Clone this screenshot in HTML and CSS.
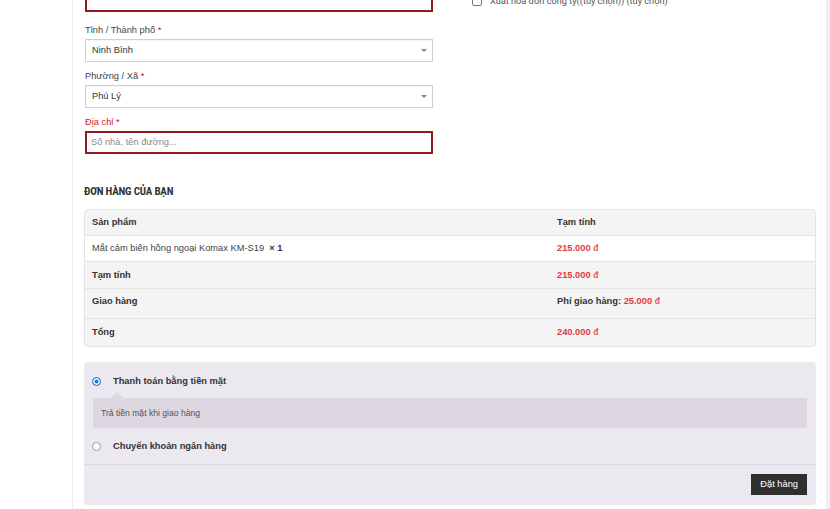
FILE: index.html
```html
<!DOCTYPE html>
<html lang="vi">
<head>
<meta charset="utf-8">
<title>Thanh toán</title>
<link rel="stylesheet" href="styles.css">
</head>
<body>
<div class="page">
  <main class="main">
    <div class="cols">
      <div class="col-left">
        <div class="field first">
          <div class="input error"></div>
        </div>
        <div class="field">
          <label class="label">Tỉnh / Thành phố <abbr class="req">*</abbr></label>
          <div class="select">Ninh Bình<span class="arrow"></span></div>
        </div>
        <div class="field">
          <label class="label">Phường / Xã <abbr class="req">*</abbr></label>
          <div class="select">Phủ Lý<span class="arrow"></span></div>
        </div>
        <div class="field">
          <label class="label label-error">Địa chỉ <abbr class="req">*</abbr></label>
          <div class="input error placeholder">Số nhà, tên đường...</div>
        </div>
      </div>
      <div class="col-right">
        <label class="check"><span class="box"></span>Xuất hoá đơn công ty((tùy chọn)) (tùy chọn)</label>
      </div>
    </div>

    <h3 class="order-title">ĐƠN HÀNG CỦA BẠN</h3>

    <table class="order">
      <colgroup><col class="c1"><col class="c2"></colgroup>
      <thead>
        <tr><th>Sản phẩm</th><th>Tạm tính</th></tr>
      </thead>
      <tbody>
        <tr class="item"><td>Mắt cảm biến hồng ngoại Komax KM-S19&nbsp; <strong class="qty">× 1</strong></td><td><span class="price">215.000 <span class="cur">đ</span></span></td></tr>
      </tbody>
      <tfoot>
        <tr><th>Tạm tính</th><td><span class="price">215.000 <span class="cur">đ</span></span></td></tr>
        <tr class="ship"><th>Giao hàng</th><td><strong class="ship-label">Phí giao hàng:</strong> <span class="price">25.000 <span class="cur">đ</span></span></td></tr>
        <tr class="total"><th>Tổng</th><td><span class="price">240.000 <span class="cur">đ</span></span></td></tr>
      </tfoot>
    </table>

    <div class="payment">
      <ul class="methods">
        <li class="method">
          <div class="method-row"><span class="radio checked"></span><span class="method-name">Thanh toán bằng tiền mặt</span></div>
          <div class="method-desc">Trả tiền mặt khi giao hàng</div>
        </li>
        <li class="method second">
          <div class="method-row"><span class="radio"></span><span class="method-name">Chuyển khoản ngân hàng</span></div>
        </li>
      </ul>
      <div class="place-order">
        <button class="btn" type="button">Đặt hàng</button>
      </div>
    </div>
  </main>
  <div class="scrollbar"></div>
</div>
</body>
</html>
```
FILE: styles.css
```css
* { box-sizing: border-box; }
html, body { margin: 0; padding: 0; background: #fff; }
body {
  font-family: "Liberation Sans", Arial, sans-serif;
  font-size: 9.3px;
  line-height: 14px;
  color: #333;
  overflow: hidden;
}
.page {
  display: flex;
  min-height: 509px;
}
.main {
  flex: 1;
  margin-left: 72px;
  border-left: 1px solid #ececec;
  padding: 0 10px 0 11px;
}
.scrollbar {
  width: 4px;
  background: #f1f1f1;
}

/* form columns */
.cols {
  display: grid;
  grid-template-columns: 349px 1fr;
  column-gap: 39px;
  margin-top: -11px;
}
.field { display: flex; flex-direction: column; margin-bottom: 6px; margin-left: 1px; }
.field.first { margin-bottom: 10px; }
.label { display: block; height: 14px; margin-bottom: 3px; color: #444; padding-top: 1px; }
.label-error { color: #d0202b; }
.req { color: #d0202b; text-decoration: none; border: 0; }
.input, .select {
  height: 23px;
  border: 1px solid #cfcfcf;
  background: #fff;
  padding: 0 6px;
  line-height: 21px;
  color: #333;
  position: relative;
}
.select { padding-left: 6px; box-shadow: inset 0 1px 1px rgba(0,0,0,0.04); }
.input.error { border: 2px solid #8e1b1f; line-height: 19px; padding-left: 4px; }
.placeholder { color: #8a8a8a; }
.arrow {
  position: absolute;
  right: 5px;
  top: 9px;
  width: 0; height: 0;
  border-left: 3px solid transparent;
  border-right: 3px solid transparent;
  border-top: 3px solid #888;
}
.col-right { padding-top: 5px; }
.check { display: flex; align-items: center; height: 14px; color: #555; font-family: Roboto, "Liberation Sans", sans-serif; font-size: 9.2px; }
.box {
  width: 10px; height: 10px;
  border: 1px solid #777;
  border-radius: 2px;
  margin-right: 8px;
  background: #fff;
}

/* order */
.order-title {
  margin: 25px 0 10px;
  font-family: "Liberation Sans Narrow", "Roboto Condensed", "DejaVu Sans Condensed", sans-serif;
  font-weight: 700;
  font-size: 11px;
  line-height: 14px;
  letter-spacing: -0.2px;
  color: #333;
}
.order {
  width: 732px;
  table-layout: fixed;
  border-collapse: separate;
  border-spacing: 0;
  border: 1px solid #e4e4e4;
  border-radius: 4px;
  overflow: hidden;
  background: #f4f4f4;
}
.c1 { width: 465px; }
.order th, .order td {
  text-align: left;
  padding: 6px 8px 6px 7px;
  line-height: 14px;
  vertical-align: top;
  border-top: 1px solid #e4e4e4;
}
.order th { font-weight: 700; color: #333; }
.order thead th { border-top: 0; padding-top: 5px; }
.order .item td { background: #fff; font-weight: 400; color: #444; padding-top: 5px; }
.order .ship th, .order .ship td { padding-top: 5px; padding-bottom: 10px; }
.order .total th, .order .total td { padding-bottom: 7px; }
.qty { font-weight: 700; color: #333; }
.price { color: #e5383d; font-weight: 700; }
.cur { font-size: 8.5px; opacity: 0.85; }
.ship-label { color: #333; }

/* payment */
.payment {
  margin-top: 15px;
  background: #ebe9ef;
  border-radius: 4px;
}
.methods {
  list-style: none;
  margin: 0;
  padding: 12px 9px 11px;
  border-bottom: 1px solid #dcd7e0;
}
.method.second { margin-top: 11px; }
.method-row { display: flex; align-items: center; height: 14px; }
.radio {
  width: 9px; height: 9px;
  border-radius: 50%;
  border: 1px solid #9a9a9a;
  background: #fff;
  margin-left: -1px;
  margin-right: 12px;
}
.radio.checked {
  border-color: #2a7ae2;
  background: #1f6fe0;
  box-shadow: inset 0 0 0 1.5px #fff;
}
.method-name { font-weight: 700; color: #333; }
.method-desc {
  position: relative;
  margin-top: 10px;
  background: #dcd7e0;
  padding: 8px 8px;
  line-height: 14px;
  font-size: 8.6px;
  color: #555;
}
.method-desc::before {
  content: "";
  position: absolute;
  left: 18px;
  top: -6px;
  border-left: 6px solid transparent;
  border-right: 6px solid transparent;
  border-bottom: 6px solid #dcd7e0;
}
.place-order {
  display: flex;
  justify-content: flex-end;
  padding: 9px 9px 10px;
}
.btn {
  height: 21px;
  padding: 0 9px;
  border: 0;
  background: #2f2f2f;
  color: #fff;
  font-family: "Liberation Sans", Arial, sans-serif;
  font-size: 9.3px;
  line-height: 21px;
  cursor: pointer;
}
```
